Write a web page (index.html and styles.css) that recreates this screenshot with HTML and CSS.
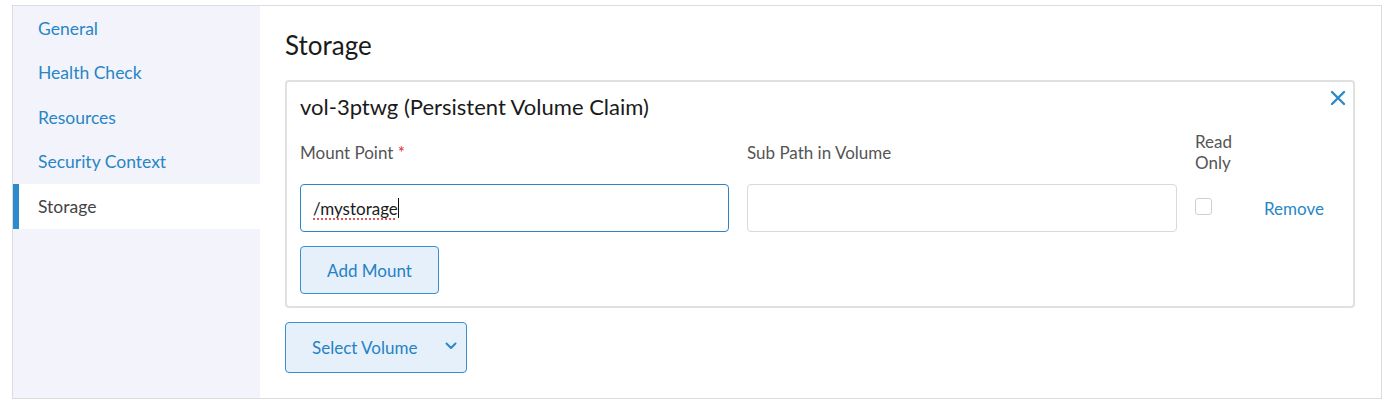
FILE: index.html
```html
<!DOCTYPE html>
<html>
<head>
<meta charset="utf-8">
<link rel="stylesheet" href="styles.css">
</head>
<body>
<div class="frame">
  <nav class="sidebar">
    <a class="nav-item">General</a>
    <a class="nav-item">Health Check</a>
    <a class="nav-item">Resources</a>
    <a class="nav-item">Security Context</a>
    <a class="nav-item active">Storage</a>
  </nav>
  <main class="main">
    <h2 class="heading">Storage</h2>
    <section class="card">
      <h3 class="card-title">vol-3ptwg (Persistent Volume Claim)</h3>
      <button class="close" aria-label="Close">
        <svg width="16" height="16" viewBox="0 0 16 16"><path d="M2 2L14 14M14 2L2 14" stroke="#2a8ac9" stroke-width="2.4" stroke-linecap="round" fill="none"/></svg>
      </button>
      <div class="mount-grid">
        <div class="label">Mount Point <span class="req">*</span></div>
        <div class="label">Sub Path in Volume</div>
        <div class="label readonly">Read<br>Only</div>
        <div></div>
        <div class="input focused"><span class="typed">/mystorage</span><span class="caret"></span></div>
        <div class="input"></div>
        <div class="check-cell"><span class="checkbox"></span></div>
        <a class="remove">Remove</a>
      </div>
      <button class="btn add-mount">Add Mount</button>
    </section>
    <button class="btn select-volume">Select Volume
      <svg class="chev" width="12" height="8" viewBox="0 0 12 8"><path d="M1.5 1.5L6 6L10.5 1.5" stroke="#2a8ac9" stroke-width="2" fill="none" stroke-linecap="round" stroke-linejoin="round"/></svg>
    </button>
  </main>
</div>
</body>
</html>
```
FILE: styles.css
```css
* { box-sizing: border-box; }
body {
  margin: 0;
  background: #fff;
  font-family: Lato, "Open Sans", sans-serif;
  color: #222;
}
.frame {
  margin: 5px 0 0 12px;
  width: 1370px;
  height: 394px;
  border: 1px solid #dcdcdc;
  display: flex;
}
.sidebar {
  width: 247px;
  background: #f3f4fb;
  display: flex;
  flex-direction: column;
}
.nav-item {
  height: 44.5px;
  display: flex;
  align-items: center;
  padding-left: 25px;
  font-size: 17.5px;
  color: #2886c6;
}
.nav-item.active {
  background: #fff;
  color: #444;
  border-left: 6px solid #2d8bcb;
  padding-left: 19px;
}
.main {
  flex: 1;
  padding: 0 26px 0 25px;
}
.heading {
  margin: 0;
  padding-top: 24px;
  font-size: 26px;
  line-height: 30px;
  font-weight: 400;
  color: #1a1a1a;
  margin-bottom: 20px;
}
.card {
  position: relative;
  border: 2px solid #e0e0e0;
  border-radius: 4px;
  padding: 12px 13px 12px 13px;
}
.card-title {
  margin: 0;
  font-size: 22px;
  line-height: 26px;
  font-weight: 400;
  color: #1a1a1a;
}
.close {
  position: absolute;
  top: 8px;
  right: 7px;
  border: 0;
  background: none;
  padding: 0;
  width: 16px;
  height: 16px;
}
.close svg { display: block; }
.mount-grid {
  display: grid;
  grid-template-columns: 429px 430px 51px auto;
  column-gap: 18px;
  row-gap: 11px;
  align-items: center;
  margin-top: 11px;
}
.label {
  font-size: 17px;
  line-height: 21px;
  color: #555;
}
.req { color: #e0312f; }
.input {
  height: 48px;
  border: 1px solid #d9d9d9;
  border-radius: 4px;
  display: flex;
  align-items: center;
  padding-left: 12px;
  font-size: 17px;
  color: #1a1a1a;
}
.input.focused { border-color: #2a86c4; }
.typed {
  text-decoration: underline dotted #e03b3b;
  text-underline-offset: 4px;
}
.caret {
  width: 1px;
  height: 20px;
  background: #111;
}
.check-cell { display: flex; align-items: center; }
.checkbox {
  width: 17px;
  height: 17px;
  border: 1px solid #cfcfcf;
  border-radius: 3px;
  background: #fff;
  margin-top: -3px;
}
.remove {
  font-size: 17px;
  color: #2886c6;
}
.btn {
  font-family: Lato, "Open Sans", sans-serif;
  font-size: 17px;
  color: #2482c4;
  background: #e6f0fb;
  border: 1px solid #3a8fd0;
  border-radius: 4px;
}
.add-mount {
  margin-top: 14px;
  width: 139px;
  height: 48px;
  padding: 0;
}
.select-volume {
  margin-top: 14px;
  width: 182px;
  height: 51px;
  display: flex;
  align-items: center;
  padding: 0 0 0 26px;
}
.chev { margin-left: 28px; margin-top: -4px; }
```
